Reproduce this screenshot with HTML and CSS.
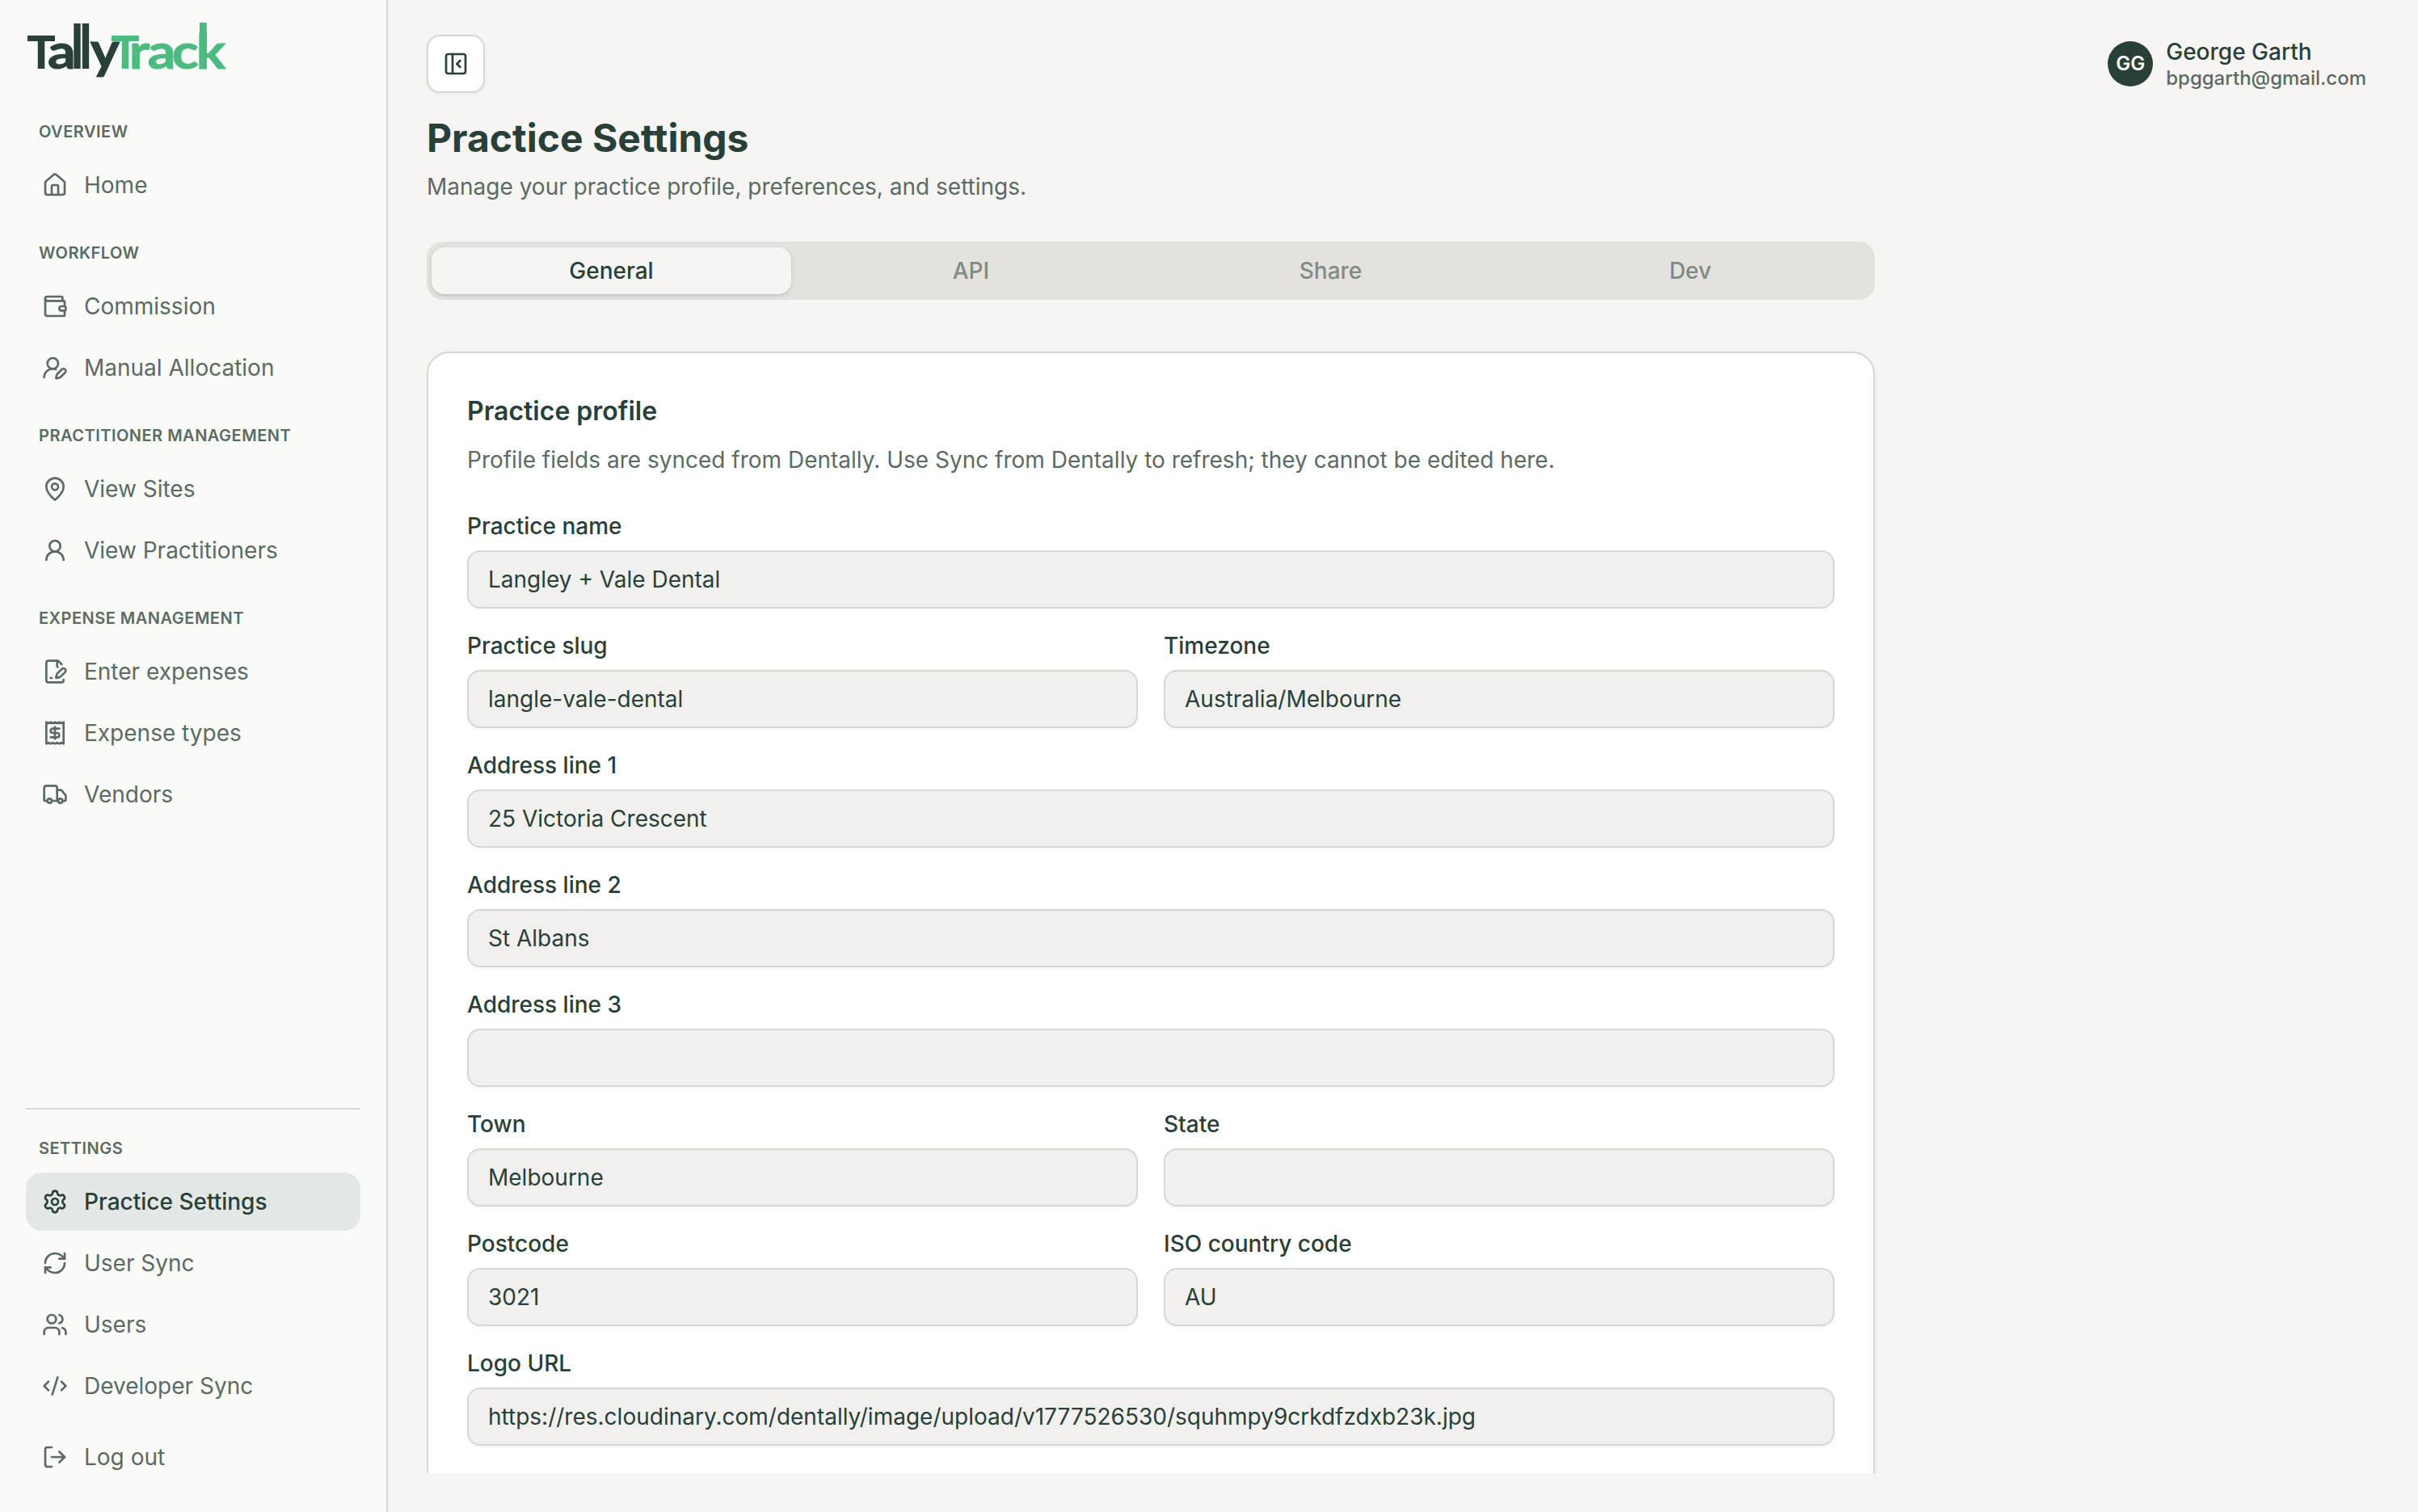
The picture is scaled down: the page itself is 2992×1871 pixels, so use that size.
FILE: index.html
```html
<!DOCTYPE html>
<html lang="en">
<head>
  <meta charset="utf-8" />
  <title>Practice Settings • TallyTrack</title>
  <meta name="viewport" content="width=device-width, initial-scale=1" />
  <link rel="stylesheet" href="styles.css">
</head>
<body>
  <aside class="sidebar">
    <a class="logo" href="#" aria-label="TallyTrack">
      <svg width="256" height="84" viewBox="0 0 256 84">
        <g class="logo-dark">
          <text x="0" y="63">T</text>
          <text class="round" transform="translate(0 63) scale(1.2 1.03)" x="22.6" y="0">a</text>
          <text transform="translate(0 63) scale(1 1.36)" x="55.8 66.3" y="0">ll</text>
          <text class="round" transform="translate(0 63) scale(1.2 1.1)" x="66.4" y="0">y</text>
        </g>
        <g class="logo-green">
          <text x="104" y="63">T</text>
          <text class="round" transform="translate(0 63) scale(1.2 1.03)" x="106.5 125.6 150.7 175.7" y="0">rack</text>
          <rect x="215" y="6" width="8.8" height="30" />
        </g>
      </svg>
    </a>

    <nav class="nav">
      <div class="nav-label">Overview</div>
      <a class="nav-item" href="#">
        <svg class="icon" viewBox="0 0 24 24"><path d="M15 21v-8a1 1 0 0 0-1-1h-4a1 1 0 0 0-1 1v8"/><path d="M3 10a2 2 0 0 1 .709-1.528l7-5.999a2 2 0 0 1 2.582 0l7 5.999A2 2 0 0 1 21 10v9a2 2 0 0 1-2 2H5a2 2 0 0 1-2-2z"/></svg>
        Home
      </a>

      <div class="nav-label">Workflow</div>
      <a class="nav-item" href="#">
        <svg class="icon" viewBox="0 0 24 24"><path d="M19 7V4a1 1 0 0 0-1-1H5a2 2 0 0 0 0 4h15a1 1 0 0 1 1 1v4h-3a2 2 0 0 0 0 4h3a1 1 0 0 0 1-1v-2a1 1 0 0 0-1-1"/><path d="M3 5v14a2 2 0 0 0 2 2h15a1 1 0 0 0 1-1v-4"/></svg>
        Commission
      </a>
      <a class="nav-item" href="#">
        <svg class="icon" viewBox="0 0 24 24"><path d="M2 21a8 8 0 0 1 10.821-7.487"/><path d="M21.378 16.626a1 1 0 0 0-3.004-3.004l-4.01 4.012a2 2 0 0 0-.506.854l-.837 2.87a.5.5 0 0 0 .62.62l2.87-.837a2 2 0 0 0 .854-.506z"/><circle cx="10" cy="8" r="5"/></svg>
        Manual Allocation
      </a>

      <div class="nav-label">Practitioner management</div>
      <a class="nav-item" href="#">
        <svg class="icon" viewBox="0 0 24 24"><path d="M20 10c0 4.993-5.539 10.193-7.399 11.799a1 1 0 0 1-1.202 0C9.539 20.193 4 14.993 4 10a8 8 0 0 1 16 0"/><circle cx="12" cy="10" r="3"/></svg>
        View Sites
      </a>
      <a class="nav-item" href="#">
        <svg class="icon" viewBox="0 0 24 24"><circle cx="12" cy="8" r="5"/><path d="M20 21a8 8 0 0 0-16 0"/></svg>
        View Practitioners
      </a>

      <div class="nav-label">Expense management</div>
      <a class="nav-item" href="#">
        <svg class="icon" viewBox="0 0 24 24"><path d="M14.364 13.634a2 2 0 0 0-.506.854l-.837 2.87a.5.5 0 0 0 .62.62l2.87-.837a2 2 0 0 0 .854-.506l4.013-4.009a1 1 0 0 0-3.004-3.004z"/><path d="M14.487 7.858A1 1 0 0 1 14 7V2"/><path d="M20 19.645V20a2 2 0 0 1-2 2H6a2 2 0 0 1-2-2V4a2 2 0 0 1 2-2h8a2.4 2.4 0 0 1 1.704.706l2.516 2.516"/><path d="M8 18h1"/></svg>
        Enter expenses
      </a>
      <a class="nav-item" href="#">
        <svg class="icon" viewBox="0 0 24 24"><path d="M4 2v20l2-1 2 1 2-1 2 1 2-1 2 1 2-1 2 1V2l-2 1-2-1-2 1-2-1-2 1-2-1-2 1Z"/><path d="M16 8h-6a2 2 0 1 0 0 4h4a2 2 0 1 1 0 4H8"/><path d="M12 17.5v-11"/></svg>
        Expense types
      </a>
      <a class="nav-item" href="#">
        <svg class="icon" viewBox="0 0 24 24"><path d="M14 18V6a2 2 0 0 0-2-2H4a2 2 0 0 0-2 2v11a1 1 0 0 0 1 1h2"/><path d="M15 18H9"/><path d="M19 18h2a1 1 0 0 0 1-1v-3.65a1 1 0 0 0-.22-.624l-3.48-4.35A1 1 0 0 0 17.52 8H14"/><circle cx="17" cy="18" r="2"/><circle cx="7" cy="18" r="2"/></svg>
        Vendors
      </a>
    </nav>

    <nav class="nav nav-bottom">
      <div class="nav-label">Settings</div>
      <a class="nav-item active" href="#">
        <svg class="icon" viewBox="0 0 24 24"><path d="M9.671 4.136a2.34 2.34 0 0 1 4.659 0 2.34 2.34 0 0 0 3.319 1.915 2.34 2.34 0 0 1 2.33 4.033 2.34 2.34 0 0 0 0 3.831 2.34 2.34 0 0 1-2.33 4.033 2.34 2.34 0 0 0-3.319 1.915 2.34 2.34 0 0 1-4.659 0 2.34 2.34 0 0 0-3.32-1.915 2.34 2.34 0 0 1-2.33-4.033 2.34 2.34 0 0 0 0-3.831A2.34 2.34 0 0 1 6.35 6.051a2.34 2.34 0 0 0 3.319-1.915"/><circle cx="12" cy="12" r="3"/></svg>
        Practice Settings
      </a>
      <a class="nav-item" href="#">
        <svg class="icon" viewBox="0 0 24 24"><path d="M3 12a9 9 0 0 1 9-9 9.75 9.75 0 0 1 6.74 2.74L21 8"/><path d="M21 3v5h-5"/><path d="M21 12a9 9 0 0 1-9 9 9.75 9.75 0 0 1-6.74-2.74L3 16"/><path d="M8 16H3v5"/></svg>
        User Sync
      </a>
      <a class="nav-item" href="#">
        <svg class="icon" viewBox="0 0 24 24"><path d="M16 21v-2a4 4 0 0 0-4-4H6a4 4 0 0 0-4 4v2"/><path d="M16 3.128a4 4 0 0 1 0 7.744"/><path d="M22 21v-2a4 4 0 0 0-3-3.87"/><circle cx="9" cy="7" r="4"/></svg>
        Users
      </a>
      <a class="nav-item" href="#">
        <svg class="icon" viewBox="0 0 24 24"><path d="m18 16 4-4-4-4"/><path d="m6 8-4 4 4 4"/><path d="m14.5 4-5 16"/></svg>
        Developer Sync
      </a>
      <a class="nav-item logout" href="#">
        <svg class="icon" viewBox="0 0 24 24"><path d="m16 17 5-5-5-5"/><path d="M21 12H9"/><path d="M9 21H5a2 2 0 0 1-2-2V5a2 2 0 0 1 2-2h4"/></svg>
        Log out
      </a>
    </nav>
  </aside>

  <main class="main">
    <header class="topbar">
      <button class="toggle" type="button" aria-label="Collapse sidebar">
        <svg class="icon" viewBox="0 0 24 24"><rect x="3" y="3" width="18" height="18" rx="2"/><path d="M9 3v18"/><path d="m16 15-3-3 3-3"/></svg>
      </button>
      <div class="user">
        <div class="avatar">GG</div>
        <div class="user-text">
          <div class="user-name">George Garth</div>
          <div class="user-email">bpggarth@gmail.com</div>
        </div>
      </div>
    </header>

    <div class="content">
      <h1>Practice Settings</h1>
      <p class="sub">Manage your practice profile, preferences, and settings.</p>

      <div class="tabs">
        <button class="tab active" type="button">General</button>
        <button class="tab" type="button">API</button>
        <button class="tab" type="button">Share</button>
        <button class="tab" type="button">Dev</button>
      </div>

      <section class="card">
        <h2>Practice profile</h2>
        <p class="card-desc">Profile fields are synced from Dentally. Use Sync from Dentally to refresh; they cannot be edited here.</p>

        <form class="form" autocomplete="off">
          <div class="field wide">
            <label for="name">Practice name</label>
            <input id="name" value="Langley + Vale Dental" readonly />
          </div>
          <div class="field">
            <label for="slug">Practice slug</label>
            <input id="slug" value="langle-vale-dental" readonly />
          </div>
          <div class="field">
            <label for="timezone">Timezone</label>
            <input id="timezone" value="Australia/Melbourne" readonly />
          </div>
          <div class="field wide">
            <label for="address1">Address line 1</label>
            <input id="address1" value="25 Victoria Crescent" readonly />
          </div>
          <div class="field wide">
            <label for="address2">Address line 2</label>
            <input id="address2" value="St Albans" readonly />
          </div>
          <div class="field wide">
            <label for="address3">Address line 3</label>
            <input id="address3" value="" readonly />
          </div>
          <div class="field">
            <label for="town">Town</label>
            <input id="town" value="Melbourne" readonly />
          </div>
          <div class="field">
            <label for="state">State</label>
            <input id="state" value="" readonly />
          </div>
          <div class="field">
            <label for="postcode">Postcode</label>
            <input id="postcode" value="3021" readonly />
          </div>
          <div class="field">
            <label for="country">ISO country code</label>
            <input id="country" value="AU" readonly />
          </div>
          <div class="field wide">
            <label for="logo">Logo URL</label>
            <input id="logo" value="https://res.cloudinary.com/dentally/image/upload/v1777526530/squhmpy9crkdfzdxb23k.jpg" readonly />
          </div>
        </form>
      </section>
    </div>
  </main>
</body>
</html>
```
FILE: styles.css
```css
:root {
  --dark:#284037;
  --green:#4bbb80;
  --muted:#5b6b63;
  --bg:#f6f5f3;
  --side:#fafaf8;
  --line:#d7d8d4;
}
* {
  box-sizing:border-box;
}
body {
  margin:0;
  height:100vh;
  display:flex;
  overflow:hidden;
  font-family:Inter,sans-serif;
  font-size:28px;
  line-height:40px;
  color:var(--dark);
  background:var(--bg);
}
h1, h2, p {
  margin:0;
}
.icon {
  width:32px;
  height:32px;
  flex:none;
  fill:none;
  stroke:currentColor;
  stroke-width:2;
  stroke-linecap:round;
  stroke-linejoin:round;
}

/* Sidebar */
.sidebar {
  width:480px;
  flex:none;
  display:flex;
  flex-direction:column;
  padding:22px 32px 32px;
  background:var(--side);
  border-right:2px solid var(--line);
}
.logo {
  display:block;
  height:84px;
}
.logo svg {
  display:block;
  overflow:visible;
}
.logo text {
  font-family:Inter,sans-serif;
  font-size:57px;
  font-weight:700;
}
.logo .round {
  font-family:Lato,sans-serif;
  stroke-width:.9;
}
.logo-dark {
  fill:var(--dark);
}
.logo-dark .round {
  stroke:var(--dark);
}
.logo-green {
  fill:var(--green);
}
.logo-green .round {
  stroke:var(--green);
}
.nav {
  display:flex;
  flex-direction:column;
  gap:4px;
  margin-top:40px;
}
.nav-label {
  height:32px;
  margin-bottom:11px;
  padding-left:16px;
  font-size:20px;
  line-height:34px;
  font-weight:600;
  letter-spacing:.025em;
  text-transform:uppercase;
  color:var(--muted);
}
.nav-item + .nav-label {
  margin-top:27px;
}
.nav-item {
  height:72px;
  flex:none;
  display:flex;
  align-items:center;
  gap:20px;
  padding:0 20px;
  border-radius:20px;
  color:var(--muted);
  text-decoration:none;
}
.nav-item.active {
  background:#e3e7e5;
  color:var(--dark);
  font-weight:500;
}
.nav-bottom {
  margin-top:auto;
  padding-top:31px;
  border-top:2px solid var(--line);
}
.logout {
  margin-top:12px;
}

/* Main area */
.main {
  flex:1;
  min-width:0;
  display:flex;
  flex-direction:column;
  padding:43px 64px 48px 48px;
}
.topbar {
  height:72px;
  flex:none;
  display:flex;
  align-items:center;
  justify-content:space-between;
}
.toggle {
  width:72px;
  height:72px;
  padding:0;
  display:flex;
  align-items:center;
  justify-content:center;
  color:var(--dark);
  background:#fff;
  border:2px solid var(--line);
  border-radius:16px;
  box-shadow:0 2px 4px rgba(0,0,0,.05);
}
.user {
  display:flex;
  align-items:center;
  gap:16px;
}
.avatar {
  width:56px;
  height:56px;
  border-radius:50%;
  display:flex;
  align-items:center;
  justify-content:center;
  background:var(--dark);
  color:#fff;
  font-size:24px;
  font-weight:600;
}
.user-text {
  font-weight:500;
}
.user-name {
  line-height:35px;
}
.user-email {
  font-size:24px;
  line-height:30px;
  color:var(--muted);
}
.content {
  flex:1;
  min-height:0;
  overflow:hidden;
  padding-top:24px;
}
h1 {
  font-size:48px;
  line-height:64px;
  font-weight:700;
}
.sub {
  margin-top:8px;
  color:var(--muted);
}
.tabs {
  width:1792px;
  height:72px;
  margin-top:48px;
  padding:6px;
  display:flex;
  align-items:center;
  border-radius:20px;
  background:#e3e2de;
}
.tab {
  flex:1;
  height:58px;
  padding:0;
  border:0;
  border-radius:16px;
  background:none;
  font:inherit;
  font-weight:500;
  color:#7f8c85;
}
.tab.active {
  background:var(--bg);
  color:var(--dark);
  box-shadow:0 2px 6px rgba(0,0,0,.1), 0 2px 4px -2px rgba(0,0,0,.1);
}
.card {
  width:1792px;
  margin-top:64px;
  padding:48px 48px 96px;
  background:#fff;
  border:2px solid var(--line);
  border-radius:28px;
  box-shadow:0 2px 6px rgba(0,0,0,.06);
}
h2 {
  font-size:32px;
  line-height:48px;
  font-weight:600;
}
.card-desc {
  margin-top:16px;
  color:var(--muted);
}
.form {
  margin-top:48px;
  display:grid;
  grid-template-columns:1fr 1fr;
  gap:32px;
}
.wide {
  grid-column:1 / -1;
}
label {
  display:block;
  margin-bottom:16px;
  line-height:28px;
  font-weight:500;
}
input {
  display:block;
  width:100%;
  height:72px;
  padding:0 24px;
  font:inherit;
  color:var(--dark);
  background:#f1f0ee;
  border:2px solid var(--line);
  border-radius:16px;
  outline:none;
  box-shadow:0 2px 4px rgba(0,0,0,.04);
}
```
